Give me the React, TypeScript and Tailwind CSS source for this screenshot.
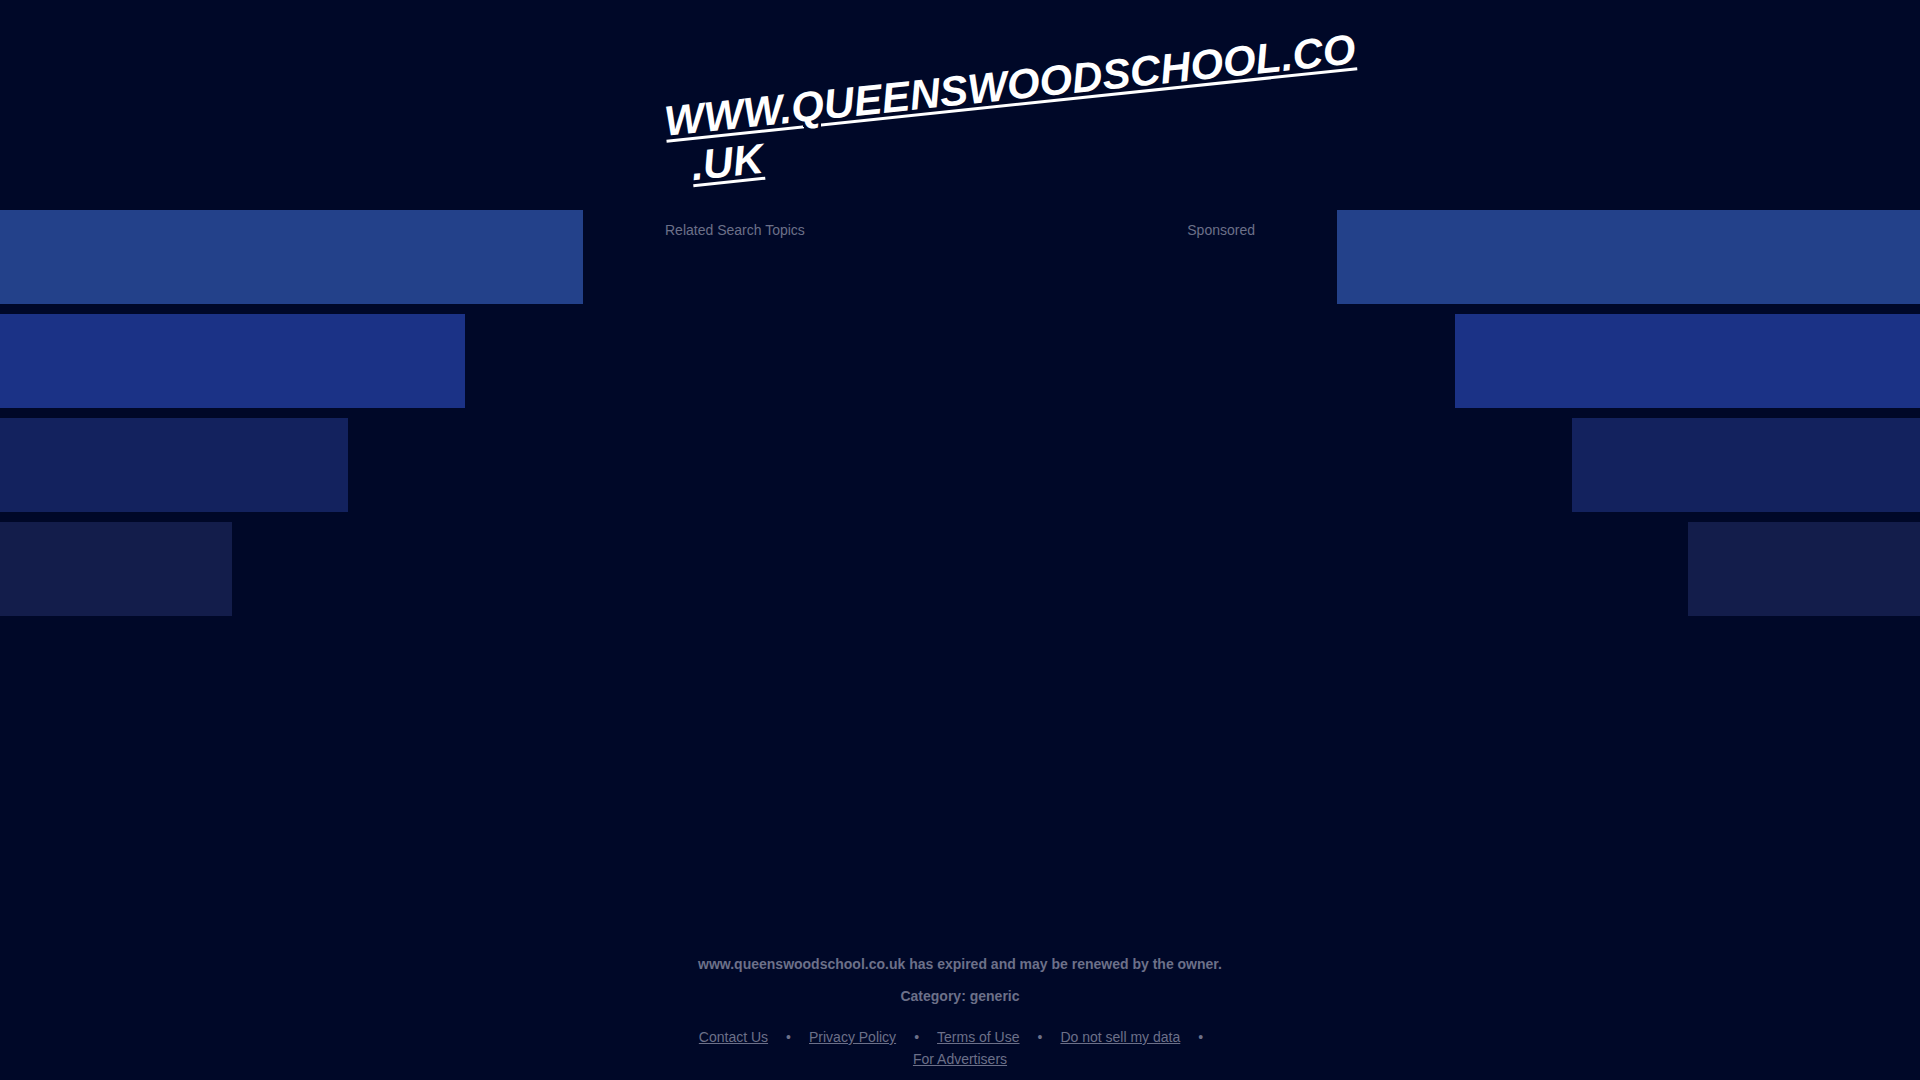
import React from 'react';

const DOMAIN = 'www.queenswoodschool.co.uk';

// decorative side bars, widest first
const BARS = [
  { width: 'w-[583px]', color: 'bg-[#23418a]' },
  { width: 'w-[465px]', color: 'bg-[#1b3286]' },
  { width: 'w-[348px]', color: 'bg-[#13225e]' },
  { width: 'w-[232px]', color: 'bg-[#131d4b]' },
];

const FOOTER_LINKS = ['Contact Us', 'Privacy Policy', 'Terms of Use', 'Do not sell my data', 'For Advertisers'];

const SideBars: React.FC<{ side: 'left' | 'right' }> = ({ side }) => (
  <div className={`flex flex-col gap-[10px] ${side === 'left' ? 'items-start' : 'items-end'}`}>
    {BARS.map((bar, index) => (
      <div key={index} className={`h-[94px] ${bar.width} ${bar.color}`}></div>
    ))}
  </div>
);

const App: React.FC = () => {
  const title = DOMAIN.toUpperCase();
  const cut = title.lastIndexOf('.');

  return (
    <div className="flex flex-col h-[1080px] overflow-hidden bg-[#000828] font-['Liberation_Sans',Arial,sans-serif]">
      {/* Header */}
      <div className="w-[590px] mx-auto pt-[98px]">
        <h1 className="w-[720px] -ml-[3px] pl-[22px] -indent-[22px] text-[42px] leading-[47px] font-bold italic text-white underline decoration-[3px] underline-offset-[4px] origin-top-left -rotate-6">
          {title.slice(0, cut)}
          <wbr />
          {title.slice(cut)}
        </h1>
      </div>

      {/* Middle row */}
      <div className="grid grid-cols-[1fr_590px_1fr] mt-[18px]">
        <SideBars side="left" />
        <div className="flex justify-between pt-[10px] text-[14px] leading-5 text-[#6c7089]">
          <span>Related Search Topics</span>
          <span>Sponsored</span>
        </div>
        <SideBars side="right" />
      </div>

      {/* Footer */}
      <div className="mt-auto w-[590px] mx-auto pb-[10px] text-center text-[14px] text-[#6c7089]">
        <p className="leading-5 font-bold">{DOMAIN} has expired and may be renewed by the owner.</p>
        <p className="mt-[11.5px] leading-5 font-bold">Category: generic</p>
        <div className="mt-[20.5px] flex flex-wrap justify-center leading-[22px]">
          {FOOTER_LINKS.map((link, index) => (
            <React.Fragment key={link}>
              <a href="#" className="underline hover:text-[#9a9db3]">{link}</a>
              {index < FOOTER_LINKS.length - 1 && <span className="mx-[18px]">•</span>}
            </React.Fragment>
          ))}
        </div>
      </div>
    </div>
  );
};

export default App;
